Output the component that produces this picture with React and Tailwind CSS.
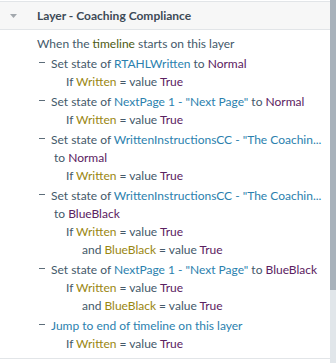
const C = {
  base: 'text-[#44596a]',
  obj: 'text-[#2b7fae]',
  state: 'text-[#5b2161]',
  varb: 'text-[#9a8611]',
  green: 'text-[#4d5a12]',
};

function Cond({ v, val, and }) {
  return (
    <div className={and ? 'pl-[82px] h-[18px]' : 'pl-[66px] h-[18px]'}>
      {and ? <span className={C.base}>and </span> : <span className={C.base}>If </span>}
      <span className={C.varb}>{v}</span>
      <span className={C.base}> = value </span>
      <span className={C.state}>{val}</span>
    </div>
  );
}

function Action({ children, cont }) {
  return (
    <div className="pt-[2px]">
      <div className="flex items-center h-[18px] pl-[39px]">
        <span className="w-[6px] h-px shrink-0 bg-[#5d6d79] mb-[3px]" />
        <span className="ml-[6px] whitespace-nowrap">{children}</span>
      </div>
      {cont && <div className="pl-[54px] h-[18px] whitespace-nowrap">{cont}</div>}
    </div>
  );
}

export default function App() {
  return (
    <div
      className="w-[336px] h-[363px] flex bg-white text-[12px] leading-[18px] overflow-hidden"
      style={{ fontFamily: 'Lato, "Noto Sans", sans-serif' }}
    >
      <div className="w-[330px] flex flex-col">
        <div className="mt-[1px] h-[29px] flex items-center bg-[#f7f7f7] border-t border-b border-[#e2e5e8]">
          <svg width="7" height="4" viewBox="0 0 7 4" className="ml-[10px] shrink-0">
            <path d="M0 0 L7 0 L3.5 4 Z" fill="#a3a8ad" />
          </svg>
          <span className="ml-[20px] font-bold text-[#3d4a56]">Layer - Coaching Compliance</span>
        </div>
        <div className="pt-[5px] h-[329px] border-b border-[#e2e5e8]">
          <div className="pl-[37px] h-[18px]">
            <span className={C.base}>When the </span>
            <span className={C.green}>timeline</span>
            <span className={C.base}> starts on this layer</span>
          </div>

          <Action>
            <span className={C.base}>Set state of </span>
            <span className={C.obj}>RTAHLWritten</span>
            <span className={C.base}> to </span>
            <span className={C.state}>Normal</span>
          </Action>
          <Cond v="Written" val="True" />

          <Action>
            <span className={C.base}>Set state of </span>
            <span className={C.obj}>NextPage 1 - "Next Page"</span>
            <span className={C.base}> to </span>
            <span className={C.state}>Normal</span>
          </Action>
          <Cond v="Written" val="True" />

          <Action
            cont={
              <>
                <span className={C.base}>to </span>
                <span className={C.state}>Normal</span>
              </>
            }
          >
            <span className={C.base}>Set state of </span>
            <span className={C.obj}>WrittenInstructionsCC - "The Coachin...</span>
          </Action>
          <Cond v="Written" val="True" />

          <Action
            cont={
              <>
                <span className={C.base}>to </span>
                <span className={C.state}>BlueBlack</span>
              </>
            }
          >
            <span className={C.base}>Set state of </span>
            <span className={C.obj}>WrittenInstructionsCC - "The Coachin...</span>
          </Action>
          <Cond v="Written" val="True" />
          <Cond v="BlueBlack" val="True" and />

          <Action>
            <span className={C.base}>Set state of </span>
            <span className={C.obj}>NextPage 1 - "Next Page"</span>
            <span className={C.base}> to </span>
            <span className={C.state}>BlueBlack</span>
          </Action>
          <Cond v="Written" val="True" />
          <Cond v="BlueBlack" val="True" and />

          <Action>
            <span className={C.obj}>Jump to end of timeline on this layer</span>
          </Action>
          <Cond v="Written" val="True" />
        </div>
      </div>
      <div className="w-[6px] flex flex-col">
        <div className="h-[290px] bg-[#a8b2bb]" />
        <div className="flex-1 bg-[#e1e6ea]" />
      </div>
    </div>
  );
}
